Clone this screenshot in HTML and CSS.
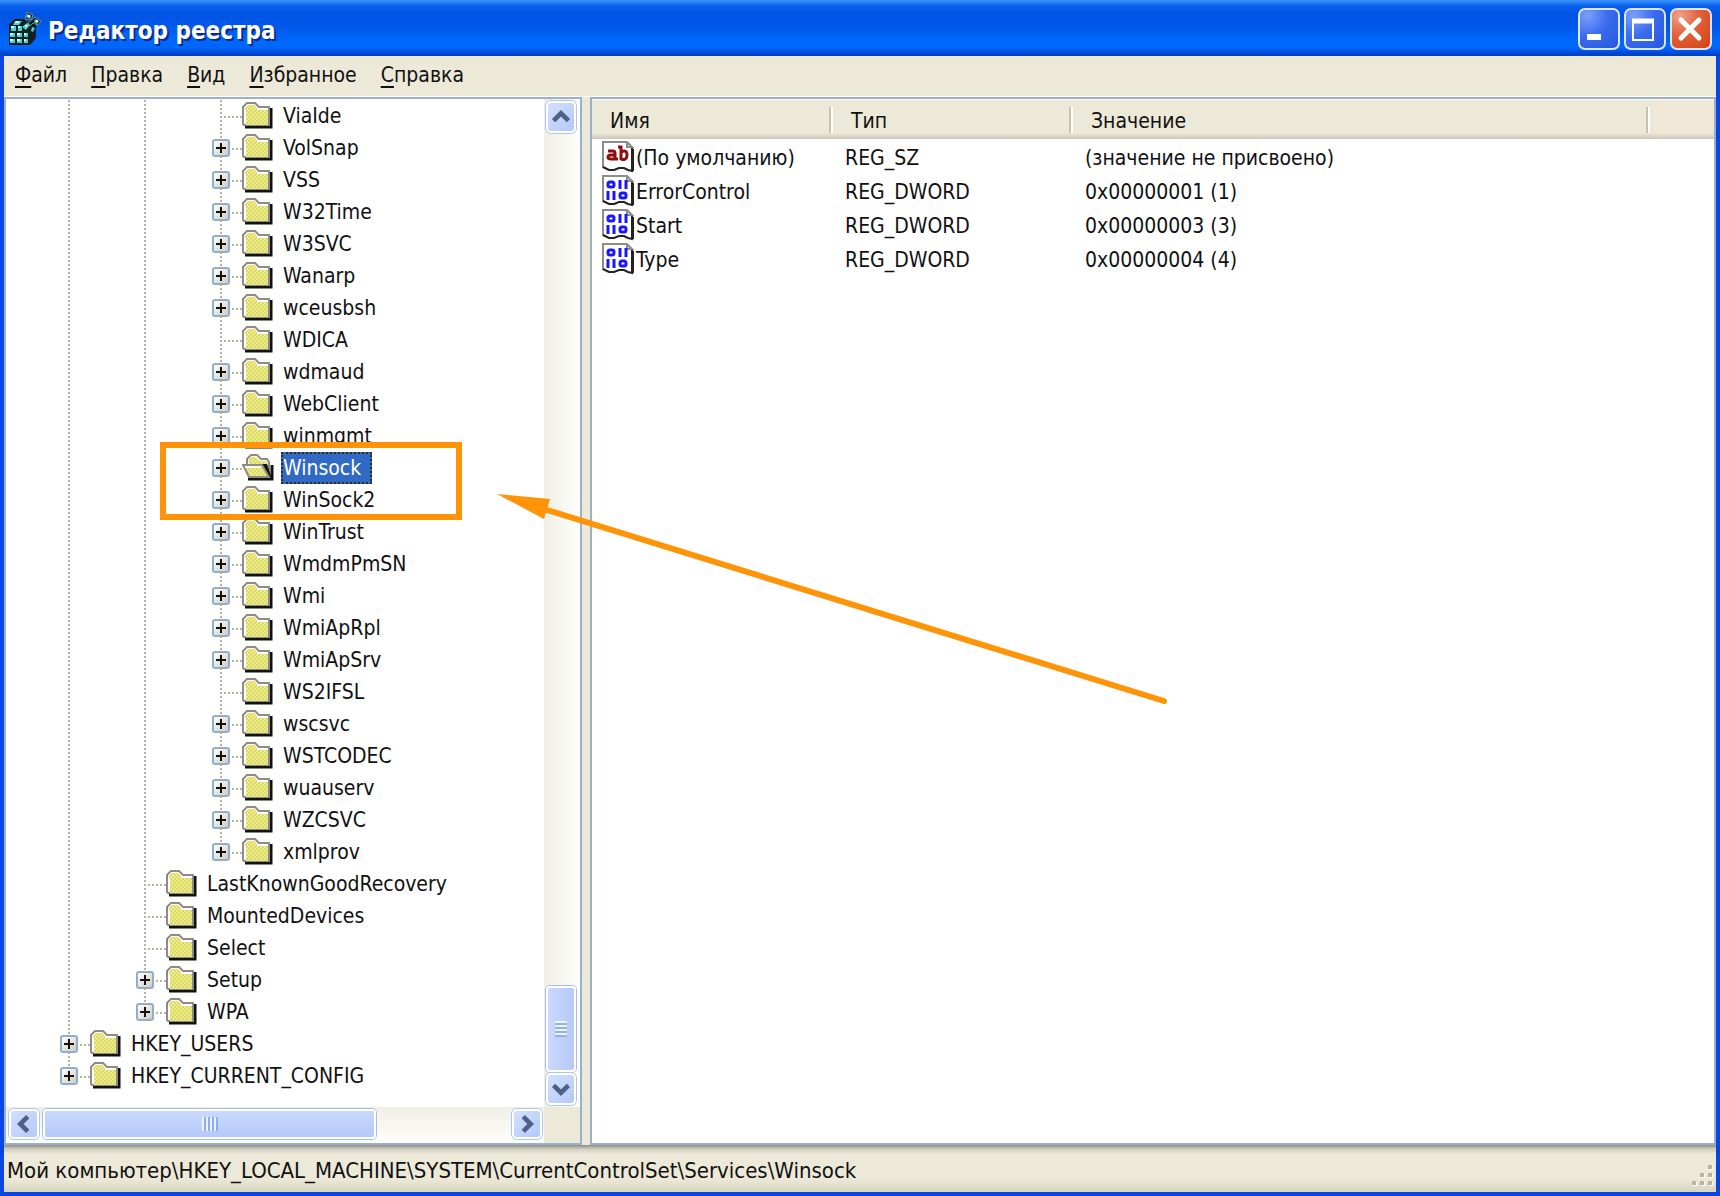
FILE: index.html
```html
<!DOCTYPE html>
<html lang="ru">
<head>
<meta charset="utf-8">
<title>Редактор реестра</title>
<link rel="stylesheet" href="styles.css">
</head>
<body>
<svg class="sprite" aria-hidden="true">
  <defs>
    <pattern id="weave" width="4" height="4" patternUnits="userSpaceOnUse">
      <rect width="4" height="4" fill="#f0f060"/>
      <rect width="2" height="2" fill="#d6d690"/>
      <rect x="2" y="2" width="2" height="2" fill="#d6d690"/>
    </pattern>
  </defs>
  <symbol id="folder" viewBox="0 0 32 28">
    <path d="M3 25H29V6" fill="none" stroke="#111" stroke-width="3"/>
    <path d="M1 22V5L5 1H13L17 5H27V23H2Z" fill="#fff" stroke="#8c8c84" stroke-width="2"/>
    <path d="M3 8V6L6 3H12L15 6V8H26V23H4V8Z" fill="url(#weave)"/>
    <path d="M3 22V9H4V22Z M15 6H26V8H16Z" fill="#fff"/>
  </symbol>
  <symbol id="folder-open" viewBox="0 0 32 28">
    <path d="M6 25H30V11" fill="none" stroke="#111" stroke-width="3"/>
    <path d="M5 11V5L9 1H15L19 5H25L27 8V23H8Z" fill="#fff" stroke="#8c8c84" stroke-width="2"/>
    <path d="M8 4L10 3H14L18 7H24L26 10V14L23 10H7V5Z" fill="url(#weave)"/>
    <path d="M20 10H25L30 25H27Z" fill="#111"/>
    <path d="M1 11H20L27 23H7Z" fill="url(#weave)" stroke="#8c8c84" stroke-width="2"/>
    <path d="M3 13H19" stroke="#fff" stroke-width="2"/>
  </symbol>
  <symbol id="page" viewBox="0 0 32 32">
    <path d="M1 1H25L30 7V29L26 29L22 27H17L12 29H7L1 26Z" fill="#fff"/>
    <path d="M1 27V1H25" fill="none" stroke="#8c8c8c" stroke-width="2"/>
    <path d="M25 1V6H30Z" fill="#eee" stroke="#8c8c8c" stroke-width="2"/>
    <path d="M30 7V30L26 29L22 27H17L12 29H7L1 26" fill="none" stroke="#222" stroke-width="2"/>
    <path d="M31 8V30" stroke="#222" stroke-width="2"/>
  </symbol>
  <symbol id="string" viewBox="0 0 32 32">
    <use href="#page"/>
    <path d="M6 10H11Q13 10 13 12V18H16M13 14H9Q6 14 6 16T9 18H13" fill="none" stroke="#8b0f0f" stroke-width="3"/>
    <path d="M16 6H19V19M19 11Q25 8 25 14T19 18" fill="none" stroke="#8b0f0f" stroke-width="3"/>
  </symbol>
  <symbol id="dword" viewBox="0 0 32 32">
    <use href="#page"/>
    <g fill="none" stroke="#1818f8" stroke-width="3">
      <rect x="6" y="7" width="6" height="5" rx="2"/><path d="M18 5V14M24 5V14M6 16V25M12 16V25"/>
      <rect x="18" y="18" width="6" height="5" rx="2"/>
    </g>
  </symbol>
  <symbol id="chevron" viewBox="0 0 28 28">
    <path d="M6 18L14 10L22 18" fill="none" stroke="#4d6185" stroke-width="5"/>
  </symbol>
</svg>

<div class="window">
  <header class="titlebar">
    <svg class="app-icon" viewBox="0 0 34 34" aria-hidden="true">
      <path d="M1 12L7 7H17L18 10L22 8L28 13V26L22 33H1Z" fill="#10201f"/>
      <path d="M19 0L25 3L23 8L17 7Z M27 5L33 9L30 13L25 11L22 14L20 11Z" fill="#10201f" stroke="#7d8a92" stroke-width="1"/>
      <g fill="#45d2d2"><path d="M3 14h5v5H3zM10 14h4v5h-4zM2 21h5v4H2zM9 21h5v4H9zM16 21h4v4h-4zM2 27h5v4H2zM9 27h5v4H9zM16 27h4v4h-4zM7 9h7l-3 4H5zM14 15l5-4 3 2-4 5zM24 15l3 1-2 4-2-1zM19 2l4 2-1 3-4-2zM27 7l4 2-2 3-3-2z"/></g>
      <g fill="#e4ffff"><path d="M3 14h3v2H3zM10 14h2v2h-2zM2 21h3v2H2zM9 21h3v2H9zM16 21h2v2h-2zM2 27h3v2H2zM9 27h3v2H9zM16 27h2v2h-2zM8 9h3v2H7zM17 13h2v2h-2zM20 3h2v2h-2zM28 8h2v2h-2z"/></g>
    </svg>
    <h1 class="title">Редактор реестра</h1>
    <div class="window-buttons">
      <button class="window-button" type="button" aria-label="Свернуть"><svg viewBox="0 0 36 36"><path d="M7 26H21" stroke="#fff" stroke-width="6"/></svg></button>
      <button class="window-button" type="button" aria-label="Развернуть"><svg viewBox="0 0 36 36"><rect x="7" y="9" width="20" height="20" fill="none" stroke="#fff" stroke-width="2"/><path d="M6 10H28" stroke="#fff" stroke-width="5"/></svg></button>
      <button class="window-button close" type="button" aria-label="Закрыть"><svg viewBox="0 0 36 36"><path d="M9 9L27 27M27 9L9 27" stroke="#fff" stroke-width="5" stroke-linecap="round"/></svg></button>
    </div>
  </header>

  <nav class="menubar">
    <button class="menu" type="button"><u>Ф</u>айл</button>
    <button class="menu" type="button"><u>П</u>равка</button>
    <button class="menu" type="button"><u>В</u>ид</button>
    <button class="menu" type="button"><u>И</u>збранное</button>
    <button class="menu" type="button"><u>С</u>правка</button>
  </nav>

  <main class="panes">
    <section class="pane tree-pane">
      <ul class="tree">
        <li>
          <ul>
            <li>
              <ul>
                <li><div class="row"><svg class="folder"><use href="#folder"/></svg><span class="label">ViaIde</span></div></li>
                <li><div class="row"><button class="expand" type="button" aria-label="Развернуть VolSnap"></button><svg class="folder"><use href="#folder"/></svg><span class="label">VolSnap</span></div></li>
                <li><div class="row"><button class="expand" type="button" aria-label="Развернуть VSS"></button><svg class="folder"><use href="#folder"/></svg><span class="label">VSS</span></div></li>
                <li><div class="row"><button class="expand" type="button" aria-label="Развернуть W32Time"></button><svg class="folder"><use href="#folder"/></svg><span class="label">W32Time</span></div></li>
                <li><div class="row"><button class="expand" type="button" aria-label="Развернуть W3SVC"></button><svg class="folder"><use href="#folder"/></svg><span class="label">W3SVC</span></div></li>
                <li><div class="row"><button class="expand" type="button" aria-label="Развернуть Wanarp"></button><svg class="folder"><use href="#folder"/></svg><span class="label">Wanarp</span></div></li>
                <li><div class="row"><button class="expand" type="button" aria-label="Развернуть wceusbsh"></button><svg class="folder"><use href="#folder"/></svg><span class="label">wceusbsh</span></div></li>
                <li><div class="row"><svg class="folder"><use href="#folder"/></svg><span class="label">WDICA</span></div></li>
                <li><div class="row"><button class="expand" type="button" aria-label="Развернуть wdmaud"></button><svg class="folder"><use href="#folder"/></svg><span class="label">wdmaud</span></div></li>
                <li><div class="row"><button class="expand" type="button" aria-label="Развернуть WebClient"></button><svg class="folder"><use href="#folder"/></svg><span class="label">WebClient</span></div></li>
                <li><div class="row"><button class="expand" type="button" aria-label="Развернуть winmgmt"></button><svg class="folder"><use href="#folder"/></svg><span class="label">winmgmt</span></div></li>
                <li><div class="row"><button class="expand" type="button" aria-label="Развернуть Winsock"></button><svg class="folder"><use href="#folder-open"/></svg><span class="label selected">Winsock</span></div></li>
                <li><div class="row"><button class="expand" type="button" aria-label="Развернуть WinSock2"></button><svg class="folder"><use href="#folder"/></svg><span class="label">WinSock2</span></div></li>
                <li><div class="row"><button class="expand" type="button" aria-label="Развернуть WinTrust"></button><svg class="folder"><use href="#folder"/></svg><span class="label">WinTrust</span></div></li>
                <li><div class="row"><button class="expand" type="button" aria-label="Развернуть WmdmPmSN"></button><svg class="folder"><use href="#folder"/></svg><span class="label">WmdmPmSN</span></div></li>
                <li><div class="row"><button class="expand" type="button" aria-label="Развернуть Wmi"></button><svg class="folder"><use href="#folder"/></svg><span class="label">Wmi</span></div></li>
                <li><div class="row"><button class="expand" type="button" aria-label="Развернуть WmiApRpl"></button><svg class="folder"><use href="#folder"/></svg><span class="label">WmiApRpl</span></div></li>
                <li><div class="row"><button class="expand" type="button" aria-label="Развернуть WmiApSrv"></button><svg class="folder"><use href="#folder"/></svg><span class="label">WmiApSrv</span></div></li>
                <li><div class="row"><svg class="folder"><use href="#folder"/></svg><span class="label">WS2IFSL</span></div></li>
                <li><div class="row"><button class="expand" type="button" aria-label="Развернуть wscsvc"></button><svg class="folder"><use href="#folder"/></svg><span class="label">wscsvc</span></div></li>
                <li><div class="row"><button class="expand" type="button" aria-label="Развернуть WSTCODEC"></button><svg class="folder"><use href="#folder"/></svg><span class="label">WSTCODEC</span></div></li>
                <li><div class="row"><button class="expand" type="button" aria-label="Развернуть wuauserv"></button><svg class="folder"><use href="#folder"/></svg><span class="label">wuauserv</span></div></li>
                <li><div class="row"><button class="expand" type="button" aria-label="Развернуть WZCSVC"></button><svg class="folder"><use href="#folder"/></svg><span class="label">WZCSVC</span></div></li>
                <li><div class="row"><button class="expand" type="button" aria-label="Развернуть xmlprov"></button><svg class="folder"><use href="#folder"/></svg><span class="label">xmlprov</span></div></li>
              </ul>
            </li>
            <li><div class="row"><svg class="folder"><use href="#folder"/></svg><span class="label">LastKnownGoodRecovery</span></div></li>
            <li><div class="row"><svg class="folder"><use href="#folder"/></svg><span class="label">MountedDevices</span></div></li>
            <li><div class="row"><svg class="folder"><use href="#folder"/></svg><span class="label">Select</span></div></li>
            <li><div class="row"><button class="expand" type="button" aria-label="Развернуть Setup"></button><svg class="folder"><use href="#folder"/></svg><span class="label">Setup</span></div></li>
            <li><div class="row"><button class="expand" type="button" aria-label="Развернуть WPA"></button><svg class="folder"><use href="#folder"/></svg><span class="label">WPA</span></div></li>
          </ul>
        </li>
        <li><div class="row"><button class="expand" type="button" aria-label="Развернуть HKEY_USERS"></button><svg class="folder"><use href="#folder"/></svg><span class="label">HKEY_USERS</span></div></li>
        <li><div class="row"><button class="expand" type="button" aria-label="Развернуть HKEY_CURRENT_CONFIG"></button><svg class="folder"><use href="#folder"/></svg><span class="label">HKEY_CURRENT_CONFIG</span></div></li>
      </ul>
      <div class="scrollbar vertical">
        <button class="scroll-button" type="button" aria-label="Вверх"><svg><use href="#chevron"/></svg></button>
        <div class="track"><div class="thumb"></div></div>
        <button class="scroll-button down" type="button" aria-label="Вниз"><svg><use href="#chevron"/></svg></button>
      </div>
      <div class="scrollbar horizontal">
        <button class="scroll-button left" type="button" aria-label="Влево"><svg><use href="#chevron"/></svg></button>
        <div class="track"><div class="thumb"></div></div>
        <button class="scroll-button right" type="button" aria-label="Вправо"><svg><use href="#chevron"/></svg></button>
      </div>
      <div class="corner"></div>
    </section>

    <section class="pane list-pane">
      <table class="values">
        <thead>
          <tr><th class="col-name">Имя</th><th class="col-type">Тип</th><th class="col-value">Значение</th><th class="col-rest"></th></tr>
        </thead>
        <tbody>
          <tr><td><div class="name"><svg><use href="#string"/></svg>(По умолчанию)</div></td><td>REG_SZ</td><td>(значение не присвоено)</td><td></td></tr>
          <tr><td><div class="name"><svg><use href="#dword"/></svg>ErrorControl</div></td><td>REG_DWORD</td><td>0x00000001 (1)</td><td></td></tr>
          <tr><td><div class="name"><svg><use href="#dword"/></svg>Start</div></td><td>REG_DWORD</td><td>0x00000003 (3)</td><td></td></tr>
          <tr><td><div class="name"><svg><use href="#dword"/></svg>Type</div></td><td>REG_DWORD</td><td>0x00000004 (4)</td><td></td></tr>
        </tbody>
      </table>
    </section>
  </main>

  <footer class="statusbar">
    <span>Мой компьютер\HKEY_LOCAL_MACHINE\SYSTEM\CurrentControlSet\Services\Winsock</span>
    <svg class="grip" viewBox="0 0 24 24" aria-hidden="true">
      <path d="M18 2h4v4h-4zM10 10h4v4h-4zM18 10h4v4h-4zM2 18h4v4H2zM10 18h4v4h-4zM18 18h4v4h-4z" fill="#fff"/>
      <path d="M17 1h4v4h-4zM9 9h4v4H9zM17 9h4v4h-4zM1 17h4v4H1zM9 17h4v4H9zM17 17h4v4h-4z" fill="#b8b4a2"/>
    </svg>
  </footer>
</div>

<div class="highlight"></div>
<svg class="arrow" viewBox="0 0 680 220" aria-hidden="true">
  <path d="M50 16L667 207" stroke="#ff9408" stroke-width="6" stroke-linecap="round"/>
  <path d="M0 0L53 5L47 25Z" fill="#ff9408"/>
</svg>
</body>
</html>
```
FILE: styles.css
```css
* { box-sizing: border-box; }

body {
  margin: 0;
  font: 21px/32px "DejaVu Sans Condensed", "DejaVu Sans", sans-serif;
  font-stretch: condensed;
  color: #111;
  background: #0a46e4;
}

button { font: inherit; color: inherit; padding: 0; border: 0; background: none; }
ul { list-style: none; margin: 0; padding: 0; }
.sprite { position: absolute; width: 0; height: 0; }

.window {
  display: flex;
  flex-direction: column;
  min-height: 100vh;
  border: solid #0a46e4;
  border-width: 0 4px 4px;
}

.titlebar {
  display: flex;
  align-items: center;
  height: 56px;
  margin: 0 -4px;
  padding: 4px 8px 0;
  background: linear-gradient(#3d95ff 0, #0a5fee 6px, #0054e3 14px, #0058ea 26px, #0068ff 42px, #0066fc 48px, #0044cf 54px, #0a3fbe);
}
.app-icon { width: 34px; height: 34px; margin-bottom: 2px; }
.title {
  flex: 1;
  margin: 2px 0 0 6px;
  font-size: 24px;
  font-weight: bold;
  color: #fff;
  text-shadow: 2px 2px 0 #0a2a8c;
}
.window-buttons { display: flex; gap: 4px; margin-bottom: 2px; }
.window-button {
  width: 42px;
  height: 42px;
  border: 2px solid #dbe6fb;
  border-radius: 7px;
  background: radial-gradient(circle at 20% 15%, #7d9ff8, #3c6cf0 45%, #2358dc);
}
.window-button.close { background: radial-gradient(circle at 20% 15%, #f0a088, #e2603a 45%, #d2410f); }
.window-button svg { display: block; width: 36px; height: 36px; }

.menubar {
  display: flex;
  gap: 24px;
  height: 41px;
  padding: 3px 11px 6px;
  background: #ece9d8;
  border-bottom: 1px solid #fff;
}
.menu { line-height: 32px; }
.menu u { text-underline-offset: 4px; text-decoration-thickness: 2px; }

.panes {
  flex: 1;
  display: grid;
  grid-template-columns: 578px 1fr;
  gap: 8px;
  background: #ece9d8;
}
.pane { border: 2px solid #9ab0cc; background: #fff; }

.tree-pane {
  display: grid;
  grid-template: 1fr 36px / 1fr 36px;
}
.tree { padding: 1px 0 0 25px; }
.tree ul { padding-left: 76px; }
.tree li {
  background: repeating-linear-gradient(#b9b5a4 0 2px, transparent 2px 4px) 37px 0 / 2px 100% no-repeat;
}
.tree li:last-child {
  background-size: 2px 16px;
}
.row {
  display: flex;
  align-items: center;
  height: 32px;
  padding-left: 59px;
  background: repeating-linear-gradient(90deg, #b9b5a4 0 2px, transparent 2px 4px) 37px 16px / 22px 2px no-repeat;
}
.expand {
  width: 18px;
  height: 18px;
  margin: 0 12px 0 -30px;
  border: 2px solid #8fadcc;
  border-radius: 3px;
  background:
    linear-gradient(#111, #111) center / 10px 2px no-repeat,
    linear-gradient(#111, #111) center / 2px 10px no-repeat,
    linear-gradient(135deg, #fff, #d0ccbe);
}
.folder { flex: none; width: 32px; height: 28px; }
.label { margin-left: 7px; padding: 0 2px; line-height: 32px; white-space: nowrap; }
.label.selected { padding-right: 11px; color: #fff; background: #316ac5; outline: 2px dotted #3a2a10; outline-offset: -2px; }

.scrollbar { display: flex; }
.vertical { flex-direction: column; padding: 2px 4px 2px 2px; background: linear-gradient(90deg, #f0efe6, #fefefb); }
.horizontal { padding: 2px 2px 4px 3px; background: linear-gradient(#f0efe6, #fefefb); }
.corner { background: #ece9d8; }
.scroll-button {
  flex: none;
  width: 30px;
  height: 32px;
  border: 2px solid #fff;
  border-radius: 5px;
  background: linear-gradient(135deg, #d3e0fe, #b4c8f8);
  box-shadow: 0 0 0 1px #b0c5ee;
}
.horizontal .scroll-button { height: 30px; }
.scroll-button svg { display: block; width: 26px; height: 26px; }
.down svg { transform: rotate(180deg); }
.left svg { transform: rotate(-90deg); }
.right svg { transform: rotate(90deg); }
.track { flex: 1; display: flex; }
.vertical .track { flex-direction: column; justify-content: flex-end; padding-bottom: 1px; }
.horizontal .track { padding-left: 4px; }
.thumb {
  border: 2px solid #fff;
  border-radius: 4px;
  box-shadow: 0 0 0 1px #a4bdf0;
}
.vertical .thumb {
  height: 86px;
  background:
    repeating-linear-gradient(#eef4fe 0 2px, #94b0ee 2px 4px) center / 12px 16px no-repeat,
    linear-gradient(90deg, #cad9fd, #b5c9f8);
}
.horizontal .thumb {
  width: 333px;
  background:
    repeating-linear-gradient(90deg, #eef4fe 0 2px, #8cabf0 2px 4px) center / 16px 14px no-repeat,
    linear-gradient(#cad9fd, #b5c9f8);
}

.values { width: 100%; border-collapse: collapse; table-layout: fixed; }
.values th {
  height: 40px;
  padding: 3px 18px 0;
  text-align: left;
  font-weight: normal;
  background:
    linear-gradient(#c8c3b0, #c8c3b0) right 2px top 8px / 2px 26px no-repeat,
    linear-gradient(#fff, #fff) right 0 top 8px / 2px 26px no-repeat,
    linear-gradient(#fff 0, #ece9d8 2px, #ece9d8 34px, #cbc7b8);
}
.values .col-rest { background: linear-gradient(#fff 0, #efe8d8 2px, #efe8d8 34px, #cbc7b8); }
.col-name { width: 241px; }
.col-type { width: 240px; }
.col-value { width: 577px; }
.values td { height: 34px; padding: 4px 12px 0; line-height: 30px; white-space: nowrap; }
.values td:first-child { padding-left: 10px; padding-right: 0; }
.name { display: flex; align-items: flex-end; gap: 2px; height: 30px; }
.name svg { flex: none; width: 32px; height: 32px; }

.statusbar {
  display: flex;
  align-items: center;
  justify-content: space-between;
  height: 47px;
  padding: 8px 1px 4px 3px;
  font-size: 22px;
  background: linear-gradient(#8f8e86 0, #d0cdbf 4px, #ece9d8 9px, #ece9d8 34px, #d8d4be);
}
.grip { align-self: flex-end; width: 24px; height: 24px; }

/* Callout drawn over the window */
.highlight {
  position: absolute;
  left: 160px;
  top: 442px;
  width: 302px;
  height: 78px;
  border: 6px solid #ff9408;
}
.arrow { position: absolute; left: 497px; top: 494px; width: 680px; height: 220px; }
```
